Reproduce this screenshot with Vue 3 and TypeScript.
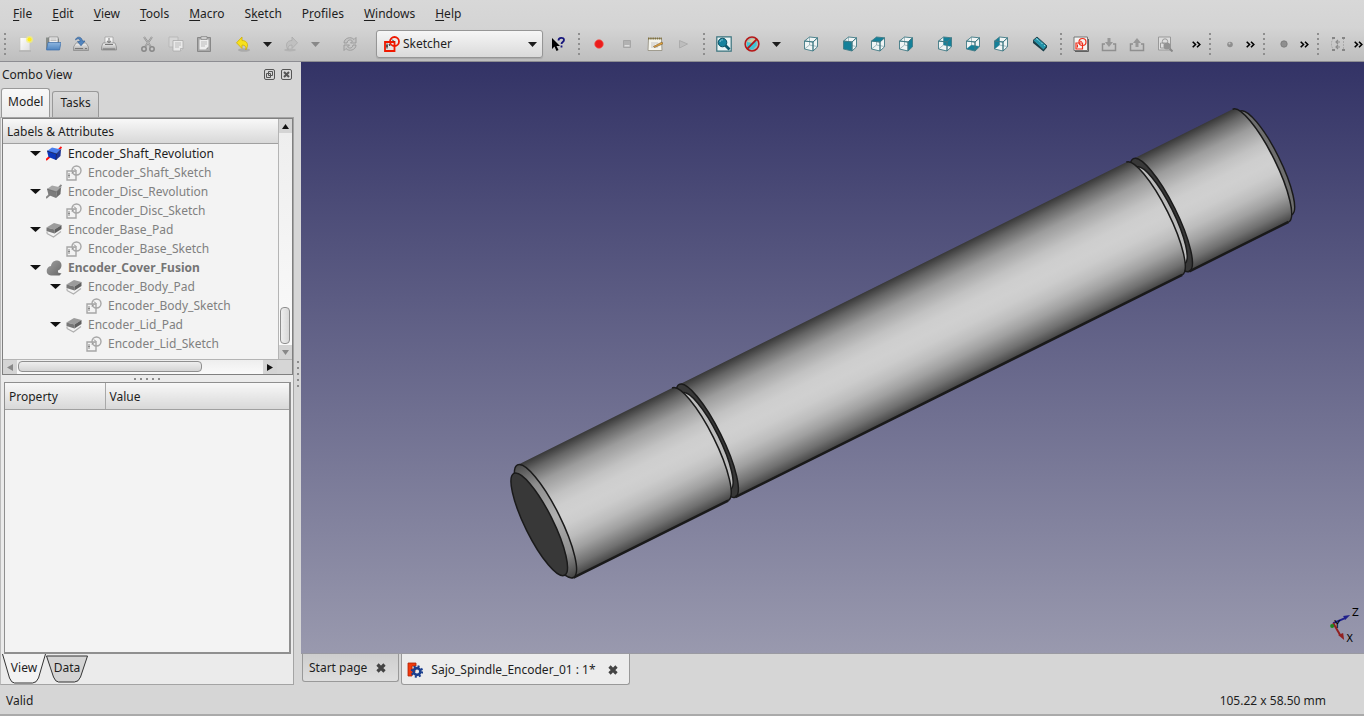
<script setup lang="ts">
import { ref } from 'vue'

interface Menu { pre: string; key: string; post: string }
interface Tool {
  kind: 'handle' | 'sep' | 'icon' | 'drop' | 'more' | 'bench'
  icon?: string
  label?: string
  off?: boolean
}
interface Node { label: string; icon: string; depth: number; open?: boolean; active?: boolean; bold?: boolean }

const menus: Menu[] = [
  { pre: '', key: 'F', post: 'ile' },
  { pre: '', key: 'E', post: 'dit' },
  { pre: '', key: 'V', post: 'iew' },
  { pre: '', key: 'T', post: 'ools' },
  { pre: '', key: 'M', post: 'acro' },
  { pre: 'S', key: 'k', post: 'etch' },
  { pre: 'P', key: 'r', post: 'ofiles' },
  { pre: '', key: 'W', post: 'indows' },
  { pre: '', key: 'H', post: 'elp' },
]

const icon = (name: string, label: string, off = false): Tool => ({ kind: 'icon', icon: name, label, off })
const tools: Tool[] = [
  { kind: 'handle' },
  icon('new', 'New'), icon('open', 'Open'), icon('save', 'Save'), icon('print', 'Print'),
  { kind: 'sep' },
  icon('cut', 'Cut', true), icon('copy', 'Copy', true), icon('paste', 'Paste'),
  { kind: 'sep' },
  icon('undo', 'Undo'), { kind: 'drop', label: 'Undo list' },
  icon('redo', 'Redo', true), { kind: 'drop', label: 'Redo list', off: true },
  { kind: 'sep' },
  icon('refresh', 'Refresh', true),
  { kind: 'sep' },
  { kind: 'bench' },
  icon('whats', "What's this?"),
  { kind: 'handle' },
  icon('record', 'Record macro'), icon('stop', 'Stop recording', true), icon('macro', 'Macros'), icon('play', 'Execute macro', true),
  { kind: 'handle' },
  icon('fit', 'Fit all'), icon('style', 'Draw style'), { kind: 'drop', label: 'Draw styles' },
  { kind: 'sep' },
  icon('axo', 'Axonometric'),
  { kind: 'sep' },
  icon('front', 'Front'), icon('top', 'Top'), icon('right', 'Right'),
  { kind: 'sep' },
  icon('rear', 'Rear'), icon('bottom', 'Bottom'), icon('left', 'Left'),
  { kind: 'sep' },
  icon('measure', 'Measure distance'),
  { kind: 'handle' },
  icon('sketch', 'New sketch'), icon('leave', 'Import', true), icon('export', 'Export', true), icon('viewsketch', 'View sketch', true),
  { kind: 'sep' },
  { kind: 'more', label: 'More sketch tools' },
  { kind: 'handle' },
  icon('point', 'Point', true), { kind: 'more', label: 'More geometries' },
  { kind: 'handle' },
  icon('dot', 'Coincident', true), { kind: 'more', label: 'More constraints' },
  { kind: 'handle' },
  icon('array', 'Close shape', true), { kind: 'more', label: 'More operations' },
]

const nodes: Node[] = [
  { label: 'Encoder_Shaft_Revolution', icon: 'rev-on', depth: 0, open: true, active: true },
  { label: 'Encoder_Shaft_Sketch', icon: 'sk', depth: 1 },
  { label: 'Encoder_Disc_Revolution', icon: 'rev-off', depth: 0, open: true },
  { label: 'Encoder_Disc_Sketch', icon: 'sk', depth: 1 },
  { label: 'Encoder_Base_Pad', icon: 'pad', depth: 0, open: true },
  { label: 'Encoder_Base_Sketch', icon: 'sk', depth: 1 },
  { label: 'Encoder_Cover_Fusion', icon: 'fusion', depth: 0, open: true, bold: true },
  { label: 'Encoder_Body_Pad', icon: 'pad', depth: 1, open: true },
  { label: 'Encoder_Body_Sketch', icon: 'sk', depth: 2 },
  { label: 'Encoder_Lid_Pad', icon: 'pad', depth: 1, open: true },
  { label: 'Encoder_Lid_Sketch', icon: 'sk', depth: 2 },
]

const bench = ref('Sketcher')

/* shaft sections in the cylinder's own axes: x runs along the shaft */
const R = 63
const section = (from: number, to: number) =>
  `M${from},${-R} L${to},${-R} A15,${R} 0 0 1 ${to},${R} L${from},${R} Z`
const rim = (at: number) => `M${at},${-R} A15,${R} 0 0 1 ${at},${R}`
</script>

<template>
  <div class="window">
    <svg class="defs" width="0" height="0" aria-hidden="true">
      <defs>
        <linearGradient id="paper" x1="0" y1="0" x2="1" y2="1"><stop offset="0" stop-color="#fff" /><stop offset="1" stop-color="#dedede" /></linearGradient>
        <linearGradient id="folder" x1="0" y1="0" x2="0" y2="1"><stop offset="0" stop-color="#8db5df" /><stop offset="1" stop-color="#4f85c0" /></linearGradient>
        <linearGradient id="metal" x1="0" y1="0" x2="0" y2="1"><stop offset="0" stop-color="#f4f4f4" /><stop offset="1" stop-color="#a4a4a4" /></linearGradient>
        <linearGradient id="blob" x1="0" y1="0" x2="1" y2="1"><stop offset="0" stop-color="#a0a0a0" /><stop offset="1" stop-color="#686868" /></linearGradient>
      </defs>
      <symbol id="new" viewBox="0 0 16 16"><path d="M3 1.500h10v13H3z" fill="url(#paper)" stroke="#c4c4c0" stroke-width=".7" /><path d="M2 15h12" stroke="#aaa" stroke-width="1" /><circle cx="12.500" cy="3.500" r="3.500" fill="#f4ef76" opacity=".75" /><circle cx="12.500" cy="3.500" r="2" fill="#ffed18" /></symbol>
      <symbol id="open" viewBox="0 0 16 16"><path d="M1 13V1.500h4l1 1h8V13z" fill="#888d89" /><path d="M4 1h9v6H4z" fill="#eee" stroke="#777" stroke-width=".6" /><path d="M5.500 3h6M5.500 4.500h6" stroke="#aaa" stroke-width=".7" /><path d="M3 6.500h13L14.500 14H1.500z" fill="url(#folder)" stroke="#3c6faa" stroke-width=".7" /></symbol>
      <symbol id="save" viewBox="0 0 16 16"><path d="M3 7h10l2.500 4v3.500H.5V11z" fill="url(#metal)" stroke="#888" stroke-width=".7" /><path d="M2 12.500h8M12 12.500h2" stroke="#777" /><path d="M2.500 4C3 .5 8.500-.5 9.500 5H12L8 9.800 4.500 5.500H7C7 2.500 5 2 2.500 4z" fill="#5285bf" stroke="#285790" stroke-width=".6" /></symbol>
      <symbol id="print" viewBox="0 0 16 16"><path d="M4 1h8v7H4z" fill="#f4f4f4" stroke="#999" stroke-width=".7" /><path d="M8 2v4M6 5l2 2 2-2" fill="none" stroke="#888" stroke-width="1.200" /><path d="M2 7h12l1.500 4v3H.5v-3z" fill="url(#metal)" stroke="#888" stroke-width=".7" /><path d="M4 8.500h8M2 13h12" stroke="#777" /></symbol>
      <symbol id="cut" viewBox="0 0 16 16"><path d="M4 1l7 10M12 1L5 11" stroke="#8e8e8e" stroke-width="2" /><path d="M4 1l7 10M12 1L5 11" stroke="#c8c8c8" stroke-width=".7" /><circle cx="4" cy="13" r="2.200" fill="none" stroke="#888" stroke-width="1.500" /><circle cx="12" cy="13" r="2.200" fill="none" stroke="#888" stroke-width="1.500" /></symbol>
      <symbol id="copy" viewBox="0 0 16 16"><path d="M1 1h9v10H1z" fill="#d6d6d6" stroke="#b4b4b4" stroke-width=".8" /><path d="M5 4.500h10v8L12.500 15H5z" fill="#e9e9e9" stroke="#aaa" stroke-width=".8" /><path d="M7 7h6M7 9h6M7 11h4" stroke="#bbb" /><path d="M12.500 15v-2.500H15" fill="#ccc" stroke="#aaa" stroke-width=".7" /></symbol>
      <symbol id="paste" viewBox="0 0 16 16"><path d="M1.500 1.500h13v14h-13z" fill="#a7a7a7" stroke="#888" /><path d="M3.500 3.500h9v10h-9z" fill="#eee" /><path d="M5 6h6M5 8h6M5 10h4" stroke="#bbb" /><path d="M5 .5h6v3H5z" fill="#ccc" stroke="#888" stroke-width=".7" /><path d="M12.500 10.500v3h-3z" fill="#999" /></symbol>
      <symbol id="undo" viewBox="0 0 16 16"><ellipse cx="9" cy="14" rx="6" ry="1.700" fill="#aaa" /><path d="M7 1v3.500c5.500 0 7 4.500 3.800 9.500C11.500 10.500 10 9 7 9v3.500L1.500 6.800z" fill="#f7e11b" stroke="#cfae00" stroke-width=".8" /></symbol>
      <symbol id="redo" viewBox="0 0 16 16"><ellipse cx="7" cy="14" rx="6" ry="1.500" fill="#b3b3b3" /><path d="M9 1v3.500c-5.500 0-7 4.500-3.800 9.500C4.500 10.500 6 9 9 9v3.500l5.500-5.700z" fill="#c0c0c0" stroke="#a9a9a9" stroke-width=".8" /></symbol>
      <symbol id="refresh" viewBox="0 0 16 16"><path d="M2 7c0-5 7-7 10-3.500L14 1.500V7H8.500l2-2C8 3 5.500 4 5 7z" fill="#c4c4c4" stroke="#999" stroke-width=".9" /><path d="M14 9c0 5-7 7-10 3.500L2 14.500V9h5.500l-2 2c2.500 2 5 1 5.500-2z" fill="#c4c4c4" stroke="#999" stroke-width=".9" /></symbol>
      <symbol id="sketcher" viewBox="0 0 16 16"><path d="M1 6h9.500v9H1z" fill="none" stroke="#f01800" stroke-width="1.800" /><circle cx="10.500" cy="5.500" r="4.500" fill="none" stroke="#f01800" stroke-width="1.800" /><path d="M3 7.500v5M2 10h2M8 3.500l2 2M5 8l1 2" stroke="#222" stroke-width="1" /></symbol>
      <symbol id="whats" viewBox="0 0 16 16"><path d="M2 2v11l2.500-2.500L6.500 15l2-1-2-4H10z" fill="#000" /><path d="M8.500 4.500C8.500 1 14 1 14 4c0 2-2.500 2-2.500 4M11.500 9.500v2" fill="none" stroke="#16167c" stroke-width="1.800" /></symbol>
      <symbol id="record" viewBox="0 0 16 16"><circle cx="8" cy="8" r="4.300" fill="#eb1c1c" stroke="#f45d55" stroke-width=".7" /></symbol>
      <symbol id="stop" viewBox="0 0 16 16"><path d="M4.500 4.500h7v7h-7z" fill="#b2b2b2" stroke="#a6a6a6" /><path d="M5.500 9h5v1.500h-5z" fill="#ddd" /></symbol>
      <symbol id="macro" viewBox="0 0 16 16"><path d="M1.500 2.500h13l.5 12H1z" fill="#f4f4ec" stroke="#908c7c" stroke-width=".8" /><path d="M1 2.500h14" stroke="#80713e" stroke-width="2.200" stroke-dasharray="1.500 .7" /><path d="M4 7h7M4 9h4M4 11h7" stroke="#bbb" stroke-width=".8" /><path d="M6.500 10.500L15 6l1 1.800L7.500 11.500z" fill="#e7a639" stroke="#755930" stroke-width=".6" /></symbol>
      <symbol id="play" viewBox="0 0 16 16"><path d="M4.500 4.500l8 3.500-8 4z" fill="#bdbdbd" stroke="#acacac" /></symbol>
      <symbol id="fit" viewBox="0 0 16 16"><path d="M.8.800h14.400v14.400H.8z" fill="#e8f4f4" stroke="#39717c" stroke-width="1.200" /><circle cx="6.500" cy="6.500" r="4.300" fill="#16839d" stroke="#084f62" /><path d="M9.500 9.500l4 4" stroke="#0b596d" stroke-width="2.800" /><path d="M4 6c0-2 2-2.500 3-2" fill="none" stroke="#8ac9d8" /></symbol>
      <symbol id="style" viewBox="0 0 16 16"><circle cx="8" cy="8" r="6.900" fill="#a9b9b4" /><path d="M3 6l4-3h5.500v6.500L9 13.500H3z" fill="#3fc4d6" /><path d="M3 6l4-3h5.500L9 7z" fill="#d0cba4" /><circle cx="8" cy="8" r="6.900" fill="none" stroke="#b61717" stroke-width="1.500" /><path d="M3.200 12.800l9.600-9.600" stroke="#b61717" stroke-width="1.800" /></symbol>
      <symbol id="hull" viewBox="0 0 16 16"><path d="M1.500 5L6.500 1l8 .8v9L10 15l-8.500-2z" fill="#f0f5f5" /><path d="M6.500 1v8l8 1.500M6.500 9l-5 4" fill="none" stroke="#7fa0a8" stroke-width=".7" /></symbol>
      <symbol id="wire" viewBox="0 0 16 16"><path d="M1.500 5L6.500 1l8 .8L10 6z M10 6l4.500-4.200v9L10 15z M1.500 5l8.500 1v9l-8.500-2z" fill="none" stroke="#3f7984" stroke-width=".9" stroke-linejoin="round" /></symbol>
      <symbol id="axo" viewBox="0 0 16 16"><use href="#hull" /><use href="#wire" /></symbol>
      <symbol id="front" viewBox="0 0 16 16"><use href="#hull" /><path d="M1.500 5l8.500 1v9l-8.500-2z" fill="#148099" /><use href="#wire" /></symbol>
      <symbol id="top" viewBox="0 0 16 16"><use href="#hull" /><path d="M1.500 5l5-4 8 .8L10 6z" fill="#148099" /><use href="#wire" /></symbol>
      <symbol id="right" viewBox="0 0 16 16"><use href="#hull" /><path d="M10 6l4.500-4.200v9L10 15z" fill="#148099" /><use href="#wire" /></symbol>
      <symbol id="rear" viewBox="0 0 16 16"><use href="#hull" /><path d="M6.500 1l8 .8v8.700l-8-1.500z" fill="#148099" /><use href="#wire" /></symbol>
      <symbol id="bottom" viewBox="0 0 16 16"><use href="#hull" /><path d="M1.500 13l5-4 8 1.500L10 15z" fill="#148099" /><use href="#wire" /></symbol>
      <symbol id="left" viewBox="0 0 16 16"><use href="#hull" /><path d="M1.500 5l5-4v8l-5 4z" fill="#148099" /><use href="#wire" /></symbol>
      <symbol id="measure" viewBox="0 0 16 16"><path d="M1 4.500L5 1l10 9-3.500 4z" fill="#2493a9" stroke="#24414a" /><path d="M1 4.500v2.500L11.500 15.500l3.500-4V10l-3.500 4z" fill="#173e49" /><path d="M4 2.500l2 1.500M6.500 4.500l1 1M9 6.500l1.500 1.500M12 9l1 1" stroke="#9bdae3" /></symbol>
      <symbol id="sketch" viewBox="0 0 16 16"><path d="M1 1h13.500v13.500H1z" fill="#f4f4f2" stroke="#777" /><path d="M2 15.500h13.500V3" fill="none" stroke="#606060" /><path d="M3 7h6.500v6H3z" fill="none" stroke="#ef2c1a" stroke-width="1.200" /><circle cx="9.500" cy="6" r="3.500" fill="none" stroke="#ef2c1a" stroke-width="1.200" /><path d="M4.500 8.500v3M7 5l2 1" stroke="#ef2c1a" /></symbol>
      <symbol id="leave" viewBox="0 0 16 16"><path d="M4 8H1.500v6.500h13V8H12" fill="none" stroke="#8f8f8f" stroke-width="1.500" /><path d="M6.500 2h3v4H12l-4 5-4-5h2.500z" fill="#989898" /></symbol>
      <symbol id="export" viewBox="0 0 16 16"><path d="M4 8H1.500v6.500h13V8H12" fill="none" stroke="#8f8f8f" stroke-width="1.500" /><path d="M6.500 11h3V7H12L8 2 4 7h2.500z" fill="#989898" /></symbol>
      <symbol id="viewsketch" viewBox="0 0 16 16"><path d="M1.500 1h12v13h-12z" fill="#ddd" stroke="#999" /><path d="M3.500 7h5v5h-5z" fill="none" stroke="#999" /><circle cx="8" cy="5.500" r="2.700" fill="none" stroke="#999" /><circle cx="10" cy="10" r="3.500" fill="#929292" /><path d="M12.500 12.500l3 3" stroke="#888" stroke-width="2" /></symbol>
      <symbol id="point" viewBox="0 0 16 16"><circle cx="8" cy="8.500" r="2.800" fill="#8e8e8e" /><circle cx="7.500" cy="7.500" r="1" fill="#c4c4c4" /></symbol>
      <symbol id="dot" viewBox="0 0 16 16"><circle cx="8" cy="8" r="3.200" fill="#8f8f8f" stroke="#777" stroke-width=".8" /></symbol>
      <symbol id="array" viewBox="0 0 16 16"><path d="M3.500 2L1.500 6v4l2 4M13.500 2v12" fill="none" stroke="#aaa" stroke-dasharray="2 1" /><path d="M6 6h4M8 4L6 6l2 2M6 11h4M8 9l-2 2 2 2" fill="none" stroke="#8c8c8c" stroke-width="1.200" /><path d="M2 1h3v2H2zM12 1h3v2h-3zM2 13h3v2H2zM12 13h3v2h-3z" fill="#858585" /></symbol>

      <symbol id="sk" viewBox="0 0 16 16"><path d="M1 6h9v9H1z" fill="none" stroke="#a6a6a6" stroke-width="1.400" /><circle cx="10.500" cy="5.500" r="4.500" fill="none" stroke="#a6a6a6" stroke-width="1.400" /><path d="M3 8v5M2 10.500h2M8 3.500l2 2M6 8.500l2-2" stroke="#888" /></symbol>
      <symbol id="rev-on" viewBox="0 0 16 16"><path d="M0 14l4-3.500M12 4.500L15.500 1" stroke="#f11" stroke-width="1.900" /><path d="M1 5l5-3.500 9 2L10.500 8z" fill="#4b7fed" /><path d="M1 5l9.500 3L10 14 2.500 11z" fill="#0b37bb" /><path d="M10.500 8L15 3.500l-.5 6.500-4.500 4z" fill="#1c3598" /><path d="M1 5l9.500 3L15 3.500M10.500 8L10 14" fill="none" stroke="#0c184e" stroke-width=".8" /></symbol>
      <symbol id="rev-off" viewBox="0 0 16 16"><path d="M0 14l4-3.500M12 4.500L15.500 1" stroke="#888" stroke-width="1.900" /><path d="M1 5l5-3.500 9 2L10.500 8z" fill="#a6a6a6" /><path d="M1 5l9.500 3L10 14 2.500 11z" fill="#7c7c7c" /><path d="M10.500 8L15 3.500l-.5 6.500-4.500 4z" fill="#6c6c6c" /><path d="M1 5l9.500 3L15 3.500" fill="none" stroke="#5c5c5c" stroke-width=".7" /></symbol>
      <symbol id="pad" viewBox="0 0 16 16"><path d="M1 11.500l6.500 3.500L15 9.500M1 9.500v2" fill="none" stroke="#b0b0b0" stroke-width="1.200" /><path d="M.5 5.500L8 1l7.500 2L8.500 7.500z" fill="#9c9c9c" /><path d="M.5 5.500l8 2v4L.5 9z" fill="#777" /><path d="M8.500 7.500l7-4.500v4l-7 4.500z" fill="#5f5f5f" /></symbol>
      <symbol id="fusion" viewBox="0 0 16 16"><path d="M5 15.500C-1 15.500-.5 6.500 5 6 5.500 2.500 8 .3 11.500.500 17 1 16.500 9.500 12 10.500v2l3.500 1-2 2z" fill="url(#blob)" /></symbol>
    </svg>

    <header class="chrome">
      <nav class="menubar" aria-label="Main menu">
        <button v-for="m in menus" :key="m.key + m.post" type="button">{{ m.pre }}<u>{{ m.key }}</u>{{ m.post }}</button>
      </nav>
      <div class="toolbar" role="toolbar" aria-label="Tools">
        <template v-for="(t, i) in tools" :key="i">
          <span v-if="t.kind === 'handle'" class="handle" />
          <span v-else-if="t.kind === 'sep'" class="sep" />
          <div v-else-if="t.kind === 'bench'" class="bench">
            <svg class="ico"><use href="#sketcher" /></svg>
            <select v-model="bench" aria-label="Workbench"><option>Sketcher</option><option>Part Design</option></select>
            <svg class="caret" viewBox="0 0 9 5"><path d="M0 0h9L4.500 5z" /></svg>
          </div>
          <button v-else-if="t.kind === 'drop'" type="button" class="drop" :class="{ off: t.off }" :aria-label="t.label">
            <svg class="caret" viewBox="0 0 9 5"><path d="M0 0h9L4.500 5z" /></svg>
          </button>
          <button v-else-if="t.kind === 'more'" type="button" class="more" :aria-label="t.label">
            <svg viewBox="0 0 9 7"><path d="M.7.700L3.500 3.500.7 6.300M5 .7l2.800 2.800L5 6.300" fill="none" stroke="#000" stroke-width="1.600" /></svg>
          </button>
          <button v-else type="button" class="tool" :disabled="t.off" :aria-label="t.label">
            <svg class="ico"><use :href="'#' + t.icon" /></svg>
          </button>
        </template>
      </div>
    </header>

    <main class="work">
      <aside class="dock">
        <div class="dock-title">
          <h2>Combo View</h2>
          <button type="button" aria-label="Float panel"><svg viewBox="0 0 11 11"><rect x=".5" y=".5" width="10" height="10" rx="1.500" /><path d="M4.500 2.500h4v4h-4zM2.500 4.500h4v4h-4z" /></svg></button>
          <button type="button" aria-label="Close panel"><svg viewBox="0 0 11 11"><rect x=".5" y=".5" width="10" height="10" rx="1.500" /><path d="M3 3l5 5M8 3L3 8" stroke-width="2" /></svg></button>
        </div>
        <div class="tabs" role="tablist">
          <button type="button" role="tab" aria-selected="true" class="tab on">Model</button>
          <button type="button" role="tab" aria-selected="false" class="tab">Tasks</button>
        </div>
        <div class="pane">
          <section class="tree">
            <div class="tree-main">
              <div class="tree-head">Labels &amp; Attributes</div>
              <ul>
                <li v-for="n in nodes" :key="n.label" :class="['d' + n.depth, { active: n.active, bold: n.bold }]">
                  <span class="twig"><svg v-if="n.open" viewBox="0 0 11 5"><path d="M0 0h11L5.500 5z" /></svg></span>
                  <svg class="ico"><use :href="'#' + n.icon" /></svg>
                  <span>{{ n.label }}</span>
                </li>
              </ul>
            </div>
            <div class="vbar">
              <button type="button" aria-label="Scroll up"><svg viewBox="0 0 7 5"><path d="M0 5h7L3.500 0z" /></svg></button>
              <span class="track"><span class="thumb" /></span>
              <button type="button" class="dim" aria-label="Scroll down"><svg viewBox="0 0 7 5"><path d="M0 0h7L3.500 5z" /></svg></button>
            </div>
            <div class="hbar">
              <button type="button" class="dim" aria-label="Scroll left"><svg viewBox="0 0 6 7"><path d="M6 0v7L0 3.500z" /></svg></button>
              <span class="track"><span class="thumb" /></span>
              <button type="button" aria-label="Scroll right"><svg viewBox="0 0 6 7"><path d="M0 0v7l6-3.500z" /></svg></button>
            </div>
          </section>
          <div class="split-h"><i v-for="d in 5" :key="d" /></div>
          <section class="props">
            <table>
              <thead><tr><th scope="col">Property</th><th scope="col">Value</th></tr></thead>
            </table>
          </section>
          <div class="subtabs" role="tablist">
            <button type="button" role="tab" aria-selected="true" class="on">
              <svg viewBox="0 0 44 30"><path d="M.5 0l7 24q2 5 5 5h18q4 0 6-5l7-24" /></svg><span>View</span>
            </button>
            <button type="button" role="tab" aria-selected="false">
              <svg viewBox="0 0 42 30"><path d="M.5 2l7 21q2 5 5 5h16q4 0 6-5l7-21z" /></svg><span>Data</span>
            </button>
          </div>
        </div>
      </aside>

      <div class="split-v"><i v-for="d in 5" :key="d" /></div>

      <section class="mdi">
        <div class="scene">
          <svg viewBox="301 62 1063 592" role="img" aria-label="Spindle encoder shaft">
            <defs>
              <linearGradient id="steel" gradientUnits="userSpaceOnUse" x1="0" y1="-63" x2="0" y2="63">
                <stop offset="0" stop-color="#383838" /><stop offset=".08" stop-color="#666" /><stop offset=".2" stop-color="#9c9c9c" /><stop offset=".35" stop-color="#c2c2c2" /><stop offset=".44" stop-color="#cecece" /><stop offset=".52" stop-color="#d0d0d0" /><stop offset=".6" stop-color="#ccc" /><stop offset=".7" stop-color="#bcbcbc" /><stop offset=".8" stop-color="#a0a0a0" /><stop offset=".92" stop-color="#707070" /><stop offset="1" stop-color="#444" />
              </linearGradient>
              <linearGradient id="bevel" gradientUnits="userSpaceOnUse" x1="0" y1="-63" x2="0" y2="63">
                <stop offset="0" stop-color="#484848" /><stop offset=".2" stop-color="#8c8c8c" /><stop offset=".5" stop-color="#b0b0b0" /><stop offset=".8" stop-color="#909090" /><stop offset="1" stop-color="#444" />
              </linearGradient>
            </defs>
            <g transform="translate(545 522) rotate(-26.440)" class="shaft">
              <ellipse cx="806" cy="0" rx="14" ry="58" fill="#6e6e6e" />
              <path :d="section(689, 800)" class="skin" />
              <path :d="rim(800)" />
              <ellipse cx="689" cy="0" rx="15" :ry="R" fill="#383838" />
              <ellipse cx="688" cy="0" rx="13" ry="54" class="floor" />
              <path :d="section(181, 681)" class="skin" />
              <path :d="rim(681)" />
              <ellipse cx="181" cy="0" rx="15" :ry="R" fill="#383838" />
              <ellipse cx="180" cy="0" rx="13" ry="54" class="floor" />
              <path :d="section(0, 173)" class="skin" />
              <path :d="rim(173)" />
              <path d="M0,63H173M181,63H681M689,63H800" class="keel" />
              <ellipse cx="0" cy="0" rx="15" :ry="R" fill="url(#bevel)" />
              <ellipse cx="-7" cy="0" rx="14" ry="57" fill="#383838" />
            </g>
            <g class="axes">
              <path d="M1334 624l12-5" stroke="#20208c" /><path d="M1344 617l7-1-5 5z" fill="#20208c" />
              <path d="M1334 624l7 12" stroke="#912020" /><path d="M1339 636l5-2 1 7z" fill="#912020" />
              <circle cx="1333" cy="627" r="2" fill="#1e851e" />
              <text x="1353" y="617">Z</text><text x="1347" y="643">X</text><text x="1335" y="629">Y</text>
            </g>
          </svg>
        </div>
        <div class="doc-tabs" role="tablist">
          <div class="doc">
            <button type="button" role="tab" aria-selected="false">Start page</button>
            <button type="button" class="x" aria-label="Close Start page"><svg viewBox="0 0 10 10"><path d="M1.500 1.500l7 7M8.500 1.500l-7 7" /></svg></button>
          </div>
          <div class="doc on">
            <svg class="ico" viewBox="0 0 16 16"><path d="M1 1h8v3H5v3h3v3H5v4H1z" fill="#f23a0d" stroke="#ad2407" stroke-width=".8" /><circle cx="10" cy="9.500" r="3.400" fill="none" stroke="#1b3f8f" stroke-width="2.600" /><circle cx="10" cy="9.500" r="5.200" fill="none" stroke="#1b3f8f" stroke-width="2" stroke-dasharray="2 2.080" /></svg>
            <button type="button" role="tab" aria-selected="true">Sajo_Spindle_Encoder_01 : 1*</button>
            <button type="button" class="x" aria-label="Close Sajo_Spindle_Encoder_01"><svg viewBox="0 0 10 10"><path d="M1.500 1.500l7 7M8.500 1.500l-7 7" /></svg></button>
          </div>
        </div>
      </section>
    </main>

    <footer class="status"><span>Valid</span><span>105.22 x 58.50 mm</span></footer>
  </div>
</template>

<style>
html, body { margin: 0; background: #d6d6d6; }
</style>

<style scoped>
* { box-sizing: border-box; }
.window {
  height: 100vh;
  display: flex;
  flex-direction: column;
  overflow: hidden;
  background: #d6d6d6;
  color: #1e1e1e;
  font: 12px/18px "Noto Sans", sans-serif;
}
.defs { position: absolute; }
button, select { font: inherit; color: inherit; border: 0; background: none; padding: 0; margin: 0; }
svg { display: block; flex: none; }
.ico { width: 16px; height: 16px; }

.chrome { flex: none; background: linear-gradient(#d8d8d8, #d4d4d4 45%, #bebebe); border-bottom: 1px solid #8d8d92; }
.menubar { display: flex; height: 27px; padding-left: 3px; }
.menubar button { padding: 0 10px; white-space: nowrap; }
.menubar u { text-underline-offset: 2px; }
.toolbar { display: flex; align-items: center; height: 34px; }
.handle { flex: none; width: 11px; height: 24px; margin-left: 2px; background: linear-gradient(#8e8e8e 2px, transparent 2px) 4px 1px / 2px 5px repeat-y; }
.handle:first-child { margin-left: 0; }
.sep { flex: none; width: 11px; }
.tool { flex: none; width: 28px; height: 28px; display: flex; align-items: center; justify-content: center; }
.drop { flex: none; width: 20px; height: 28px; display: flex; align-items: center; justify-content: center; }
.caret { width: 9px; height: 5px; fill: #1c1c1c; }
.drop.off .caret { fill: #888; }
.more { flex: none; width: 14px; height: 28px; margin-left: -1px; display: flex; align-items: center; justify-content: center; }
.more svg { width: 9px; height: 7px; }
.bench {
  display: flex; align-items: center; flex: none; width: 167px; height: 28px; margin: 0 1px; padding: 0 5px 0 7px;
  border: 1px solid #969696; border-radius: 3px; background: linear-gradient(#f6f6f6, #dadada); box-shadow: 0 1px 1px #aaa;
}
.bench select { flex: 1; min-width: 0; margin-left: 3px; appearance: none; }

.work { flex: 1; min-height: 0; display: flex; }
.dock { flex: none; width: 294px; display: flex; flex-direction: column; }
.dock-title { display: flex; align-items: center; height: 25px; padding: 0 2px; gap: 6px; }
.dock-title h2 { flex: 1; margin: 0; font-size: 12px; font-weight: 400; }
.dock-title svg { width: 11px; height: 11px; fill: none; stroke: #555; }
.tabs { display: flex; align-items: flex-end; height: 30px; padding-left: 1px; gap: 2px; }
.tab { height: 26px; padding: 0 7px 4px; border: 1px solid #999; border-bottom: 0; border-radius: 3px 3px 0 0; background: linear-gradient(#dadada, #cbcbcb); }
.tab.on { height: 29px; padding: 0 6px 2px; background: linear-gradient(#f8f8f8, #ececec); }
.pane { flex: 1; min-height: 0; display: flex; flex-direction: column; border: 1px solid #a4a4a4; border-left-color: #bbb; background: #ebebeb; }

.tree {
  flex: none; display: grid; grid-template: 1fr 15px / 1fr 14px; height: 257px; margin: 0 0 0 1px;
  border: 1px solid #808080; background: #f3f3f3;
}
.tree-main { min-width: 0; overflow: hidden; }
.tree-head { height: 25px; padding: 4px 4px 0; border-bottom: 1px solid #a0a0a0; background: linear-gradient(#f8f8f8, #d8d8d8); }
.tree ul { list-style: none; margin: 0; padding: 0; }
.tree li { display: flex; align-items: center; height: 19px; color: #808080; white-space: nowrap; }
.tree li.active { color: #1e1e1e; }
.tree li.bold { font-weight: 700; color: #757575; }
.tree li.d0 { padding-left: 27px; }
.tree li.d1 { padding-left: 47px; }
.tree li.d2 { padding-left: 67px; }
.twig { flex: none; width: 16px; }
.twig svg { width: 11px; height: 5px; fill: #111; }
.tree li .ico { margin-right: 6px; }
.vbar { display: flex; flex-direction: column; border-left: 1px solid #b4b4b4; background: #e4e4e4; }
.vbar button, .hbar button { flex: none; width: 14px; height: 14px; display: flex; align-items: center; justify-content: center; background: #d4d4d4; }
.vbar button { width: 13px; }
.vbar svg { width: 7px; height: 5px; fill: #111; }
.hbar svg { width: 6px; height: 7px; fill: #111; }
.vbar .dim svg, .hbar .dim svg { fill: #888; }
.track { flex: 1; display: flex; background: linear-gradient(#eee, #fafafa); }
.thumb { border: 1px solid #8f8f8f; border-radius: 4px; background: linear-gradient(90deg, #eee, #d8d8d8); }
.vbar .track { flex-direction: column; justify-content: flex-end; padding: 0 2px 1px 1px; }
.vbar .thumb { height: 37px; }
.hbar { grid-column: 1 / 3; display: flex; padding-right: 15px; border-top: 1px solid #b4b4b4; background: #d6d6d6; }
.hbar .track { padding: 1px 0 2px 1px; }
.hbar .thumb { width: 75%; background: linear-gradient(#eee, #d4d4d4); }

.split-h { flex: none; display: flex; align-items: center; justify-content: center; gap: 4px; height: 7px; }
.split-h i { width: 2px; height: 2px; background: #8c8c8c; }
.props { flex: 1; min-height: 0; margin: 0 2px 0 3px; border: solid #8f8f8f; border-width: 1px 2px 2px 1px; background: #f3f3f3; }
.props table { width: 100%; border-collapse: collapse; table-layout: fixed; }
.props th { height: 26px; padding: 2px 4px 0; text-align: left; font-weight: 400; border-bottom: 1px solid #a0a0a0; background: linear-gradient(#f8f8f8, #d8d8d8); }
.props th:first-child { width: 100px; border-right: 1px solid #a8a8a8; }
.subtabs { flex: none; display: flex; height: 30px; padding-left: 1px; }
.subtabs button { display: grid; width: 42px; height: 30px; }
.subtabs button.on { width: 44px; }
.subtabs svg, .subtabs span { grid-area: 1 / 1; }
.subtabs svg { width: 100%; height: 30px; fill: #d4d4d4; stroke: #333; }
.subtabs .on svg { fill: #f3f3f3; }
.subtabs span { align-self: center; padding-bottom: 3px; }

.split-v { flex: none; width: 7px; display: flex; flex-direction: column; align-items: center; justify-content: center; gap: 4px; }
.split-v i { width: 2px; height: 2px; background: #8c8c8c; }

.mdi { flex: 1; min-width: 0; display: flex; flex-direction: column; }
.scene { flex: 1; min-height: 0; background: linear-gradient(#333366, #9999ae); border-bottom: 1px solid #9a9aa2; }
.scene svg { width: 100%; height: 100%; }
.shaft { fill: none; stroke: #1a1a1a; stroke-width: 1.500; }
.skin { fill: url(#steel); stroke: none; }
.floor { fill: #bdbdbd; }
.keel { stroke-width: 2.500; }
.axes { stroke-width: 2; }
.axes text { font: 10px "DejaVu Sans", sans-serif; fill: #000; }
.doc-tabs { flex: none; display: flex; align-items: flex-start; gap: 2px; height: 31px; padding-left: 1px; }
.doc { display: flex; align-items: center; gap: 9px; height: 28px; padding: 1px 12px 0 6px; border: 1px solid #999; border-top: 0; border-radius: 0 0 3px 3px; background: linear-gradient(#cecece, #dedede); white-space: nowrap; }
.doc.on { height: 31px; padding: 1px 11px 0 5px; gap: 8px; background: #ececec; }
.doc.on .x { margin-left: 4px; }
.x svg { width: 10px; height: 10px; fill: none; stroke: #444; stroke-width: 3.200; }

.status { flex: none; display: flex; justify-content: space-between; height: 31px; padding: 7px 38px 0 6px; border-bottom: 2px solid #aaa; }
</style>
